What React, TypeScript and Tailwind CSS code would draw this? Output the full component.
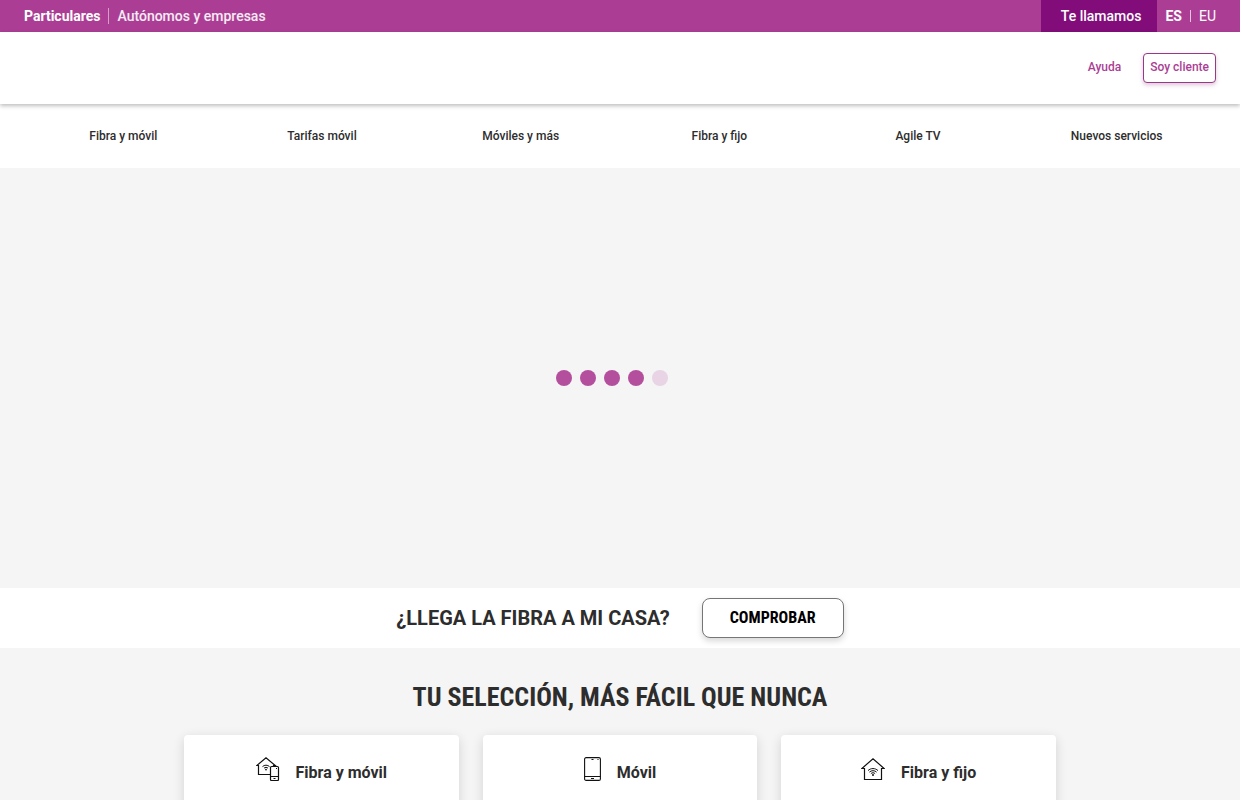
import React from 'react';
import clsx from 'clsx';

interface ServiceCard {
  label: string;
  icon: React.ReactNode;
}

const navItems = [
  'Fibra y móvil',
  'Tarifas móvil',
  'Móviles y más',
  'Fibra y fijo',
  'Agile TV',
  'Nuevos servicios',
];

const loaderDots = [
  'opacity-100',
  'opacity-100',
  'opacity-100',
  'opacity-100',
  'opacity-20',
];

const HomeMobileIcon = () => (
  <svg viewBox="0 0 24 24" className="w-6 h-6" fill="none" stroke="#111" strokeWidth="1.2" aria-hidden="true">
    <path d="M14 17.5H2.5V8.5H.8L10 .8L19.2 8.5H17.5V9.5" />
    <path d="M6.5 9.6C8.4 7.7 11.6 7.7 13.5 9.6M8 11.2C9.1 10.1 10.9 10.1 12 11.2" strokeWidth="1" />
    <circle cx="10" cy="12.6" r=".9" fill="#111" stroke="none" />
    <rect x="14.5" y="9.5" width="8" height="14" rx="1" fill="#fff" />
    <path d="M14.5 19.5H22.5M17.5 21.5H19.5M20 11.5H21" strokeWidth="1" />
  </svg>
);

const MobileIcon = () => (
  <svg viewBox="0 0 17 24" className="w-[17px] h-6" fill="none" stroke="#111" strokeWidth="1.1" aria-hidden="true">
    <rect x=".6" y=".6" width="15.8" height="22.8" rx="1.5" />
    <path d="M.6 19.5H16.4M7 21.5H10M7.5 2.5H9.5M13.5 2.5H14.5" />
  </svg>
);

const HomeWifiIcon = () => (
  <svg viewBox="0 0 24 24" className="w-6 h-6" fill="none" stroke="#111" strokeWidth="1.2" aria-hidden="true">
    <path d="M3.5 11.5H.9L12 1.7L23.1 11.5H20.5V22.5H3.5Z" />
    <path d="M7 13.6C9.8 10.9 14.2 10.9 17 13.6M8.4 15.1C10.4 13.2 13.6 13.2 15.6 15.1M9.9 16.6C11.1 15.5 12.9 15.5 14.1 16.6" strokeWidth="1" />
    <circle cx="12" cy="18.1" r="1" fill="#111" stroke="none" />
  </svg>
);

const serviceCards: ServiceCard[] = [
  { label: 'Fibra y móvil', icon: <HomeMobileIcon /> },
  { label: 'Móvil', icon: <MobileIcon /> },
  { label: 'Fibra y fijo', icon: <HomeWifiIcon /> },
];

const TopBar: React.FC = () => (
  <div className="flex items-center justify-between h-8 px-6 bg-[#ab3e94] text-white text-sm">
    <div className="flex items-center">
      <a href="#particulares" className="pr-2 font-bold">Particulares</a>
      <a href="#empresas" className="pl-2 border-l border-white/50 leading-4 font-medium text-white/90">
        Autónomos y empresas
      </a>
    </div>
    <div className="flex items-center h-full">
      <button type="button" className="h-full pl-5 pr-4 mr-2 bg-[#820d7a] font-medium">
        Te llamamos
      </button>
      <a href="#es" className="font-bold">ES</a>
      <span className="w-px h-3 mx-2 bg-white/70" />
      <a href="#eu">EU</a>
    </div>
  </div>
);

const Header: React.FC = () => (
  <header className="relative flex items-center justify-end gap-[22px] h-[72px] px-6 bg-white shadow-[0_2px_4px_rgba(0,0,0,0.25)] text-xs font-medium text-[#ab3e94]">
    <a href="#ayuda" className="pb-0.5">Ayuda</a>
    <button
      type="button"
      className="h-[30px] px-1.5 pb-0.5 rounded border border-[#963a85] bg-white shadow-[0_2px_4px_rgba(150,58,133,0.3)]"
    >
      Soy cliente
    </button>
  </header>
);

export const App: React.FC = () => {
  return (
    <div className="min-h-screen bg-[#f5f5f5] font-['Roboto',sans-serif] text-[#2d2d2d]">
      <TopBar />
      <Header />

      {/* Main navigation */}
      <nav className="grid grid-cols-6 items-center h-16 px-6 bg-white text-xs font-medium text-center">
        {navItems.map((item) => (
          <a key={item} href="#servicios">{item}</a>
        ))}
      </nav>

      {/* Carousel loader */}
      <section className="flex items-center justify-center gap-2 h-[420px] pr-4" role="status" aria-label="Cargando">
        {loaderDots.map((opacity, i) => (
          <span key={i} className={clsx('w-4 h-4 rounded-full bg-[#b44f9e]', opacity)} />
        ))}
      </section>

      {/* Coverage check */}
      <section className="flex items-center justify-center gap-8 h-[60px] bg-white">
        <h2 className="text-xl font-bold">¿LLEGA LA FIBRA A MI CASA?</h2>
        <button
          type="button"
          className="w-[142px] h-10 rounded-lg border border-[#757575] bg-white shadow-[0_3px_6px_rgba(0,0,0,0.16)] font-['Roboto_Condensed','Liberation_Sans_Narrow',Roboto,sans-serif] text-base font-bold text-black"
        >
          COMPROBAR
        </button>
      </section>

      <section className="px-6 pt-8">
        <h2 className="text-center text-[26px] leading-[34px] font-bold font-['Roboto_Condensed','Liberation_Sans_Narrow',Roboto,sans-serif]">
          TU SELECCIÓN, MÁS FÁCIL QUE NUNCA
        </h2>
        <div className="grid grid-cols-3 gap-6 max-w-[872px] mx-auto mt-[21px]">
          {serviceCards.map(({ label, icon }) => (
            <a
              key={label}
              href="#servicios"
              className="flex items-center justify-center gap-4 h-[76px] rounded bg-white shadow-[0_3px_12px_rgba(0,0,0,0.14)]"
            >
              <span className="pb-2">{icon}</span>
              <span className="text-base font-bold">{label}</span>
            </a>
          ))}
        </div>
      </section>
    </div>
  );
};

export default App;
